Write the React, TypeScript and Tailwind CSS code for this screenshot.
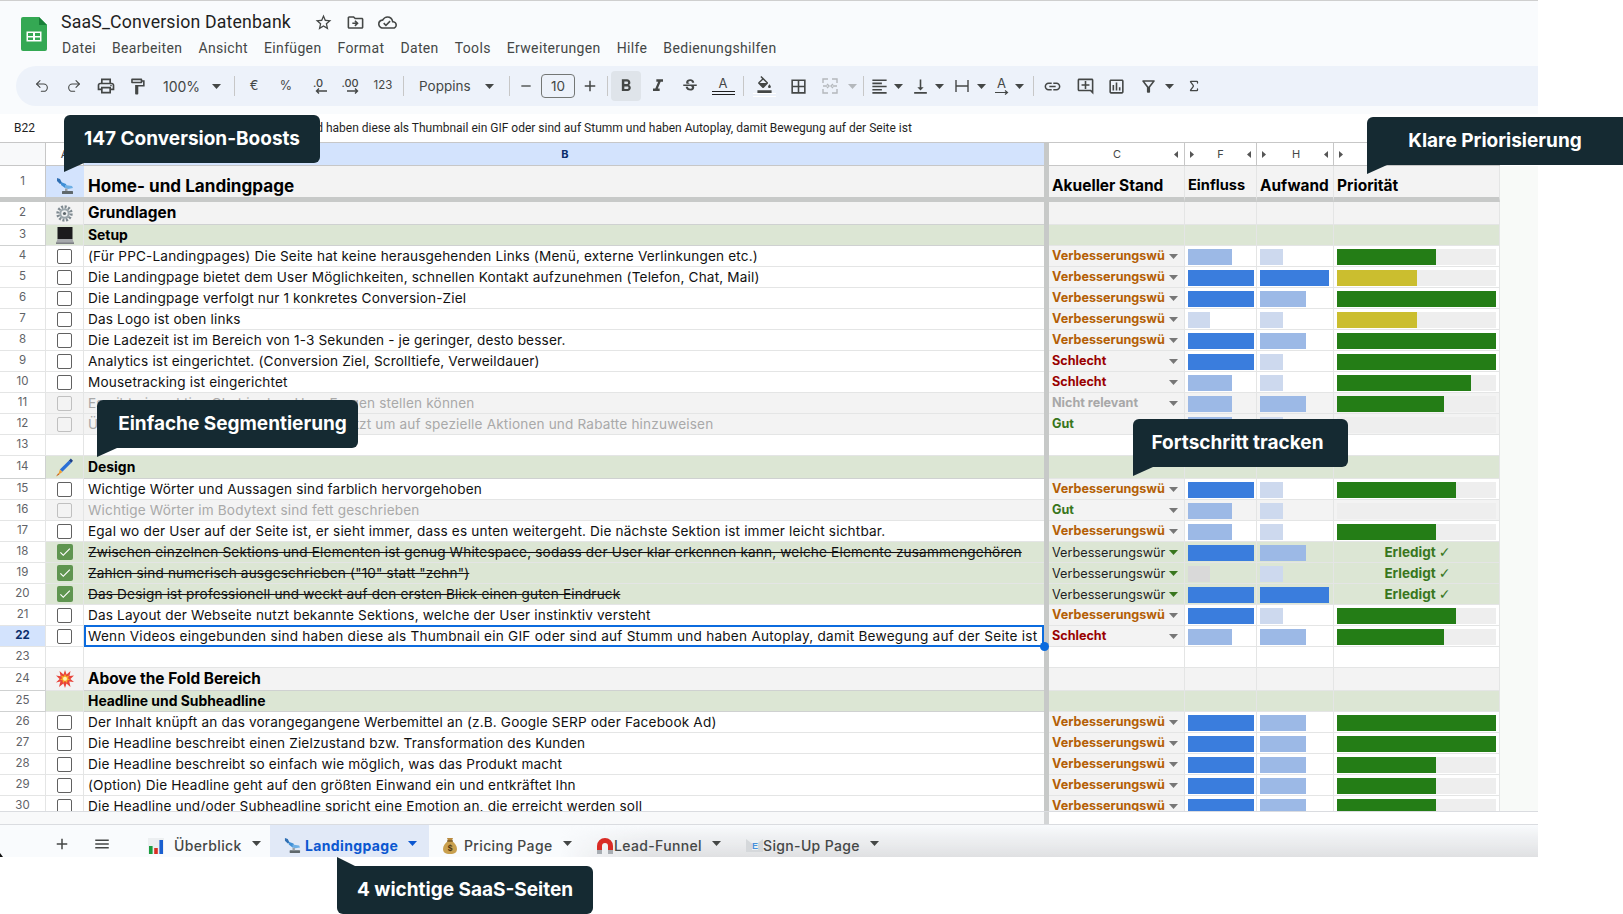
import React from "react";
import {
  MdOutlinePrint, MdOutlineFormatPaint, MdFormatBold, MdFormatItalic, MdStrikethroughS,
  MdOutlineFormatColorFill, MdBorderAll, MdFormatAlignLeft, MdVerticalAlignBottom, MdLink, MdOutlineAddComment,
  MdOutlineInsertChart, MdOutlineFilterAlt, MdStarBorder, MdOutlineDriveFileMove, MdOutlineCloudDone, MdAdd, MdRemove, MdMenu, MdCheck,
} from "react-icons/md";
import { Sigma, Undo2, Redo2 } from "lucide-react";

const Caret = ({ c = "#444746" }: { c?: string }) => (
  <svg width="9" height="5" viewBox="0 0 9 5" className="shrink-0"><path d="M0 0h9L4.5 5z" fill={c} /></svg>
);
const Sep = ({ cls }: { cls: string }) => <div className={`w-px h-[20px] bg-[#c7c7c7] shrink-0 ${cls}`} />;

const Sat = ({ s = 18 }: { s?: number }) => (
  <svg width={s} height={s} viewBox="0 0 18 18">
    <path d="M1 1l3 1 2 4-2 1-3-3z" fill="#2f6fb3" />
    <path d="M5 5l5 2 1 3-2 1-4-3z" fill="#3f8fd6" />
    <path d="M9 8l7 1 1 2-5 1-3-1z" fill="#6fb0e6" />
    <rect x="6" y="14" width="11" height="3" rx="0.5" fill="#5f686c" />
    <rect x="9" y="11.500" width="2.500" height="2.500" fill="#9aa0a6" />
  </svg>
);
const Gear = () => (
  <svg width="17" height="17" viewBox="0 0 17 17">
    <circle cx="8.5" cy="8.5" r="6.6" fill="none" stroke="#7f8a91" strokeWidth="3.2" strokeDasharray="2 1.45" />
    <circle cx="8.5" cy="8.5" r="5.2" fill="#9aa5ab" />
    <circle cx="8.5" cy="8.5" r="3.2" fill="#eef0f1" />
    <circle cx="8.5" cy="8.5" r="1.6" fill="#5d666b" />
  </svg>
);
const Laptop = () => (
  <svg width="18" height="17" viewBox="0 0 18 17">
    <rect x="1.5" y="0" width="15" height="12" fill="#1b1b1d" />
    <path d="M1.5 12h15l1.5 4H0z" fill="#a6a9ac" />
    <rect x="0" y="15.5" width="18" height="1.5" fill="#7c7f82" />
  </svg>
);
const Pen = () => (
  <svg width="19" height="19" viewBox="0 0 18 18">
    <path d="M13 2.5l2.5 2L7 13l-2.4-2z" fill="#2a6fd6" />
    <path d="M15 .5l2 2-1.500 2-2.500-2z" fill="#1c3f88" />
    <path d="M4.600 11L7 13.200 3 16z" fill="#f0a030" />
    <path d="M3 14.500l1.200 1.200L1 17.500z" fill="#c9651a" />
  </svg>
);
const Boom = () => (
  <svg width="18" height="18" viewBox="0 0 18 18">
    <path d="M9 0l1.600 4.600L14.500 1l-1 5L18 5.600l-3.600 3.300L18 12l-4.700-.5L14.500 17l-4-3.500L9 18l-1.600-4.500L3 17l1.400-5.400L0 12.500l3.600-3.600L0 5.600l4.600.6L3.500 1l4 3.600z" fill="#e8443a" />
    <path d="M9 4l1.300 2.500L13 5.500l-1 2.800L14 10l-2.600.2L11 13 9 11l-2 2-.4-2.800L4 10l2-1.700-1-2.800 2.700 1z" fill="#f9a825" />
    <circle cx="9" cy="8.800" r="2" fill="#fff3b0" />
  </svg>
);
const BarsIcon = () => (
  <svg width="16" height="16" viewBox="0 0 16 16">
    <rect width="16" height="16" fill="#eceff1" />
    <rect x="1" y="8" width="3.600" height="8" fill="#1a9e3f" />
    <rect x="6.200" y="10" width="3.600" height="6" fill="#d93025" />
    <rect x="11.400" y="2" width="3.600" height="14" fill="#1a5fd0" />
  </svg>
);
const Bag = () => (
  <svg width="14" height="17" viewBox="0 0 14 17">
    <path d="M4 1h6L8.800 4h-3.600z" fill="#b98a3e" />
    <path d="M5 4h4c3 2 5 5 5 8 0 3-2 5-7 5s-7-2-7-5c0-3 2-6 5-8z" fill="#c9a04f" />
    <rect x="4" y="3.400" width="6" height="1.200" fill="#6d4c1c" />
    <text x="7" y="14" fontSize="8.500" fontWeight="700" fill="#4d3510" textAnchor="middle" fontFamily="Liberation Sans, sans-serif">$</text>
  </svg>
);
const Magnet = () => (
  <svg width="18" height="18" viewBox="0 0 18 18">
    <path d="M1 13V9a8 8 0 0116 0v4h-5V9a3 3 0 00-6 0v4z" fill="#d92b25" />
    <rect x="1" y="13" width="5" height="4" fill="#a8adb2" />
    <rect x="12" y="13" width="5" height="4" fill="#a8adb2" />
  </svg>
);
const Mail = () => (
  <svg width="17" height="13" viewBox="0 0 17 13">
    <rect width="17" height="13" fill="#d5d8db" />
    <path d="M0 0l8.500 6.500L17 0z" fill="#eceef0" />
    <rect x="6" y="1" width="6" height="10" fill="#eef1f3" />
    <text x="9" y="10" fontSize="9" fontWeight="700" fill="#4a90d9" textAnchor="middle" fontFamily="Liberation Sans, sans-serif">E</text>
  </svg>
);

type Tone = "white" | "grey" | "green" | "off" | "done";
const toneBg: Record<Tone, string> = {
  white: "bg-white", grey: "bg-[#f3f3f3]", green: "bg-[#dce6d4]", off: "bg-[#f3f3f3]", done: "bg-[#dce6d4]",
};
type Status = "V" | "S" | "N" | "G" | "D";
interface R {
  n: number; text?: string; tone?: Tone; st?: Status; f?: string; h?: string; p?: number; c?: string; box?: boolean; icon?: React.ReactNode; head?: boolean; big?: boolean; sel?: boolean; tall?: boolean;
}

const barColor: Record<string, string> = { d: "bg-[#3a7ddd]", m: "bg-[#9cb9e6]", l: "bg-[#cdd9ee]", g: "bg-[#d9d9d9]" };
const fW: Record<string, number> = { d: 66, m: 44, l: 22, g: 22 };
const hW: Record<string, number> = { d: 69, m: 46, l: 23 };

const rows: R[] = [
  { n: 2, text: "Grundlagen", tone: "grey", head: true, big: true, icon: <Gear />, tall: true },
  { n: 3, text: "Setup", tone: "green", head: true, icon: <Laptop /> },
  { n: 4, box: true, text: "(Für PPC-Landingpages) Die Seite hat keine herausgehenden Links (Menü, externe Verlinkungen etc.)", st: "V", f: "m", h: "l", p: 62.5 },
  { n: 5, box: true, text: "Die Landingpage bietet dem User Möglichkeiten, schnellen Kontakt aufzunehmen (Telefon, Chat, Mail)", st: "V", f: "d", h: "d", p: 50, c: "y" },
  { n: 6, box: true, text: "Die Landingpage verfolgt nur 1 konkretes Conversion-Ziel", st: "V", f: "d", h: "m", p: 100 },
  { n: 7, box: true, text: "Das Logo ist oben links", st: "V", f: "l", h: "l", p: 50, c: "y" },
  { n: 8, box: true, text: "Die Ladezeit ist im Bereich von 1-3 Sekunden - je geringer, desto besser.", st: "V", f: "d", h: "m", p: 100 },
  { n: 9, box: true, text: "Analytics ist eingerichtet. (Conversion Ziel, Scrolltiefe, Verweildauer)", st: "S", f: "d", h: "l", p: 100 },
  { n: 10, box: true, text: "Mousetracking ist eingerichtet", st: "S", f: "m", h: "l", p: 84 },
  { n: 11, box: true, tone: "off", text: "Es gibt eine aktive Chat in dem User Fragen stellen können", st: "N", f: "m", h: "m", p: 67.5 },
  { n: 12, box: true, tone: "off", text: "Über der Webseite wird ein Banner genutzt um auf spezielle Aktionen und Rabatte hinzuweisen", st: "G", f: "m", h: "l" },
  { n: 13 },
  { n: 14, text: "Design", tone: "green", head: true, icon: <Pen />, tall: true },
  { n: 15, box: true, text: "Wichtige Wörter und Aussagen sind farblich hervorgehoben", st: "V", f: "d", h: "l", p: 75 },
  { n: 16, box: true, tone: "off", text: "Wichtige Wörter im Bodytext sind fett geschrieben", st: "G", f: "m", h: "l" },
  { n: 17, box: true, text: "Egal wo der User auf der Seite ist, er sieht immer, dass es unten weitergeht. Die nächste Sektion ist immer leicht sichtbar.", st: "V", f: "m", h: "l", p: 62.5 },
  { n: 18, tone: "done", text: "Zwischen einzelnen Sektions und Elementen ist genug Whitespace, sodass der User klar erkennen kann, welche Elemente zusammengehören", st: "D", f: "d", h: "m" },
  { n: 19, tone: "done", text: "Zahlen sind numerisch ausgeschrieben (\"10\" statt \"zehn\")", st: "D", f: "g", h: "l" },
  { n: 20, tone: "done", text: "Das Design ist professionell und weckt auf den ersten Blick einen guten Eindruck", st: "D", f: "d", h: "d" },
  { n: 21, box: true, text: "Das Layout der Webseite nutzt bekannte Sektions, welche der User instinktiv versteht", st: "V", f: "d", h: "l", p: 75 },
  { n: 22, box: true, sel: true, text: "Wenn Videos eingebunden sind haben diese als Thumbnail ein GIF oder sind auf Stumm und haben Autoplay, damit Bewegung auf der Seite ist", st: "S", f: "m", h: "m", p: 67.5 },
  { n: 23 },
  { n: 24, text: "Above the Fold Bereich", tone: "grey", head: true, big: true, icon: <Boom />, tall: true },
  { n: 25, text: "Headline und Subheadline", tone: "green", head: true },
  { n: 26, box: true, text: "Der Inhalt knüpft an das vorangegangene Werbemittel an (z.B. Google SERP oder Facebook Ad)", st: "V", f: "d", h: "m", p: 100 },
  { n: 27, box: true, text: "Die Headline beschreibt einen Zielzustand bzw. Transformation des Kunden", st: "V", f: "d", h: "m", p: 100 },
  { n: 28, box: true, text: "Die Headline beschreibt so einfach wie möglich, was das Produkt macht", st: "V", f: "d", h: "m", p: 62.5 },
  { n: 29, box: true, text: "(Option) Die Headline geht auf den größten Einwand ein und entkräftet Ihn", st: "V", f: "d", h: "m", p: 62.5 },
  { n: 30, box: true, text: "Die Headline und/oder Subheadline spricht eine Emotion an, die erreicht werden soll", st: "V", f: "d", h: "m", p: 62.5 },
];

const statusLabel: Record<Status, string> = { V: "Verbesserungswü", S: "Schlecht", N: "Nicht relevant", G: "Gut", D: "Verbesserungswür" };
const statusCls: Record<Status, string> = {
  V: "text-[12.6px] text-[#b45f06] font-bold",
  S: "text-[12.6px] text-[#990000] font-bold",
  N: "text-[12.6px] text-[#a8a8a8] font-bold",
  G: "text-[12.6px] text-[#38761d] font-bold",
  D: "text-[12.7px] text-[#1f1f1f] font-normal",
};

function Row({ r }: { r: R }) {
  const tone: Tone = r.tone ?? "white";
  const bg = toneBg[tone];
  const border = r.head ? "border-b border-[#cfd1d1]" : "border-b border-[#e4e5e5]";
  const isOff = tone === "off";
  const isDone = tone === "done";
  return (
    <div className={`flex shrink-0 ${r.tall ? "h-[23px]" : "h-[21px]"}`}>
      <div className={`w-[46px] shrink-0 flex items-center justify-center border-r border-[#c7c7c7] ${border} text-[11.5px] pb-px ${r.sel ? "bg-[#d3e3fd] text-[#0b2e6b] font-bold" : "bg-white text-[#5f6368]"}`}>{r.n}</div>
      <div className={`w-[38px] shrink-0 flex items-center justify-center border-r border-[#e4e5e5] ${border} ${bg}`}>
        {r.icon}
        {r.box && <div className={`w-[15px] h-[15px] rounded-[2px] border-[1.5px] ${isOff ? "border-[#c0c0c0]" : "border-[#616161]"}`} />}
        {isDone && <div className="w-[16px] h-[16px] rounded-[2px] bg-[#5f9550] flex items-center justify-center"><MdCheck className="text-white" size={14} /></div>}
      </div>
      <div className={`relative w-[960px] shrink-0 flex items-center pl-[4px] whitespace-nowrap overflow-visible ${border} ${bg} ${r.n === 14 ? "pt-px" : ""}`}>
        {r.text && (
          <span className={
            r.head
              ? `font-bold text-black ${r.big ? "text-[15.4px]" : "text-[13.9px]"}`
              : `text-[13.6px] ${r.sel ? "tracking-[0.018em]" : "tracking-[0.012em]"} ${isOff ? "text-[#a9a9a9]" : "text-[#111]"} ${isDone ? "line-through" : ""}`
          }>{r.text}</span>
        )}
        {r.sel && (
          <>
            <div className="absolute left-0 right-0 top-[-1px] bottom-[-1px] border-2 border-[#0b6bde] pointer-events-none" />
            <div className="absolute right-[-5px] bottom-[-5px] w-[9px] h-[9px] rounded-full bg-[#0b6bde] z-10" />
          </>
        )}
      </div>
      <div className="w-[5px] shrink-0 bg-[#c7c9c8]" />
      <div className={`w-[136px] shrink-0 flex items-center pl-[3px] pr-[6px] border-r border-[#e4e5e5] ${border} ${r.head || r.n === 13 || r.n === 23 || isDone ? bg : "bg-[#f3f3f3]"}`}>
        {r.st && (
          <>
            <span className={`pt-px whitespace-nowrap ${statusCls[r.st]}`}>{statusLabel[r.st]}</span>
            <span className="ml-auto"><Caret c={isDone ? "#38761d" : "#777"} /></span>
          </>
        )}
      </div>
      <div className={`w-[72px] shrink-0 pl-[3px] pt-[3px] border-r border-[#e4e5e5] ${border} ${bg}`}>
        {r.f && <div className={`h-[16px] ${barColor[r.f]}`} style={{ width: fW[r.f] }} />}
      </div>
      <div className={`w-[77px] shrink-0 pl-[3px] pt-[3px] border-r border-[#e4e5e5] ${border} ${bg}`}>
        {r.h && <div className={`h-[16px] ${barColor[r.h]}`} style={{ width: hW[r.h] }} />}
      </div>
      <div className={`w-[166px] shrink-0 border-r border-[#e4e5e5] ${border} ${bg} ${r.st && !isDone ? "pl-[3px] pt-[3px]" : ""}`}>
        {r.st && !isDone && (
          <div className="w-[159px] h-[16px] bg-[#eeeeee]">
            {r.p && <div className={`h-[16px] ${r.c === "y" ? "bg-[#cbbe2f]" : "bg-[#247d16]"}`} style={{ width: `${r.p}%` }} />}
          </div>
        )}
        {isDone && (
          <div className="h-full flex items-center justify-center font-bold text-[#38761d] text-[13.5px] pl-[2px]">Erledigt&nbsp;<span className="font-['DejaVu_Sans'] text-[14px] font-normal">✓</span></div>
        )}
      </div>
      <div className="flex-1 bg-[#f8faf8]" />
    </div>
  );
}

const Tooltip = ({ text, cls, dir = "down" }: { text: string; cls: string; dir?: "down" | "up" }) => (
  <div className={`absolute z-20 h-[48px] bg-[#152a32] text-white flex items-center justify-center font-bold text-[19px] whitespace-nowrap ${dir === "down" ? "rounded-[6px] rounded-bl-none" : "rounded-[6px] rounded-tl-none"} ${cls}`}>
    {text}
    {dir === "down" ? (
      <div className="absolute left-0 top-full w-[20px] h-[9px] bg-[#152a32] [clip-path:polygon(0_0,100%_0,0_100%)]" />
    ) : (
      <div className="absolute left-0 bottom-full w-[18px] h-[9px] bg-[#152a32] [clip-path:polygon(0_0,100%_100%,0_100%)]" />
    )}
  </div>
);

const Slot = ({ cls, children }: { cls: string; children?: React.ReactNode }) => (
  <div className={`shrink-0 flex items-center justify-center text-[#444746] ${cls}`}>{children}</div>
);

const LeftTri = () => <svg width="4" height="7" viewBox="0 0 4 7" className="shrink-0"><path d="M4 0v7L0 3.500z" fill="#555" /></svg>;
const RightTri = () => <svg width="4" height="7" viewBox="0 0 4 7" className="shrink-0"><path d="M0 0v7l4-3.500z" fill="#555" /></svg>;

const Tab = ({ icon, label, cls, active, caretCls }: { icon: React.ReactNode; label: string; cls: string; active?: boolean; caretCls: string }) => (
  <div className={`relative h-full shrink-0 flex items-center pt-[9px] ${active ? "bg-[#e1e9f7]" : ""} ${cls}`}>
    {icon}
    <span className={`text-[14px] tracking-[0.025em] ${active ? "text-[#0b57d0] font-bold" : "text-[#444746] font-medium"}`}>{label}</span>
    <span className={`pb-[5px] ${caretCls}`}><Caret c={active ? "#0b57d0" : "#444746"} /></span>
  </div>
);

export default function App() {
  return (
    <div className="relative w-[1623px] h-[914px] overflow-hidden bg-white font-['Inter',sans-serif]">
      <div className="w-[1538px] bg-[#f9fbfd] flex flex-col">
        {/* Title */}
        <div className="h-[66px] border-t border-[#cfcfcf] flex items-start pl-[21px]">
          <svg width="26" height="34" viewBox="0 0 26 34" className="mt-[16px] shrink-0">
            <path d="M2 0h16l8 8v24a2 2 0 01-2 2H2a2 2 0 01-2-2V2a2 2 0 012-2z" fill="#34a853" />
            <path d="M18 0l8 8h-8z" fill="#188038" />
            <path d="M5.500 14.500h15v10h-15z" fill="#fff" />
            <path d="M7 16h5v3H7zM14 16h5v3h-5zM7 20.500h5v2.500H7zM14 20.500h5v2.500h-5z" fill="#34a853" />
          </svg>
          <div className="ml-[14px] flex flex-col">
            <div className="flex items-center h-[23px] mt-[10px]">
              <span className="w-[231px] text-[17.7px] leading-none whitespace-nowrap text-[#1f1f1f] font-['Roboto',sans-serif] tracking-[0.01em]">SaaS_Conversion Datenbank</span>
              <Slot cls="w-[32px] ml-[15px]"><MdStarBorder size={19} /></Slot>
              <Slot cls="w-[32px]"><MdOutlineDriveFileMove size={19} /></Slot>
              <Slot cls="w-[32px]"><MdOutlineCloudDone size={19} /></Slot>
            </div>
            <div className="flex items-center gap-[16px] mt-[4px] ml-[1px] text-[14px] text-[#444746] font-['Roboto',sans-serif] tracking-[0.025em] whitespace-nowrap">
              {["Datei", "Bearbeiten", "Ansicht", "Einfügen", "Format", "Daten", "Tools", "Erweiterungen", "Hilfe", "Bedienungshilfen"].map((m) => <span key={m}>{m}</span>)}
            </div>
          </div>
        </div>

        {/* Toolbar */}
        <div className="ml-[16px] h-[40px] rounded-l-[20px] bg-[#edf2fa] flex items-center text-[#444746] shrink-0">
          <div className="w-[10px] shrink-0" />
          <Slot cls="w-[32px]"><Undo2 size={16} strokeWidth={1.6} /></Slot>
          <Slot cls="w-[32px]"><Redo2 size={16} strokeWidth={1.6} /></Slot>
          <Slot cls="w-[32px]"><MdOutlinePrint size={20} /></Slot>
          <Slot cls="w-[30px]"><MdOutlineFormatPaint size={19} /></Slot>
          <div className="w-[74px] shrink-0 flex items-center pl-[11px] pr-[5px] text-[14px]"><span>100%</span><span className="ml-auto"><Caret /></span></div>
          <Sep cls="ml-[8px]" />
          <Slot cls="w-[32px] ml-[3px] text-[13px]">€</Slot>
          <Slot cls="w-[32px] text-[12.5px]">%</Slot>
          <Slot cls="w-[32px]">
            <div className="flex flex-col items-center leading-none text-[11px] font-medium">
              <span>.0</span>
              <svg width="12" height="6" viewBox="0 0 12 6" className="-mt-[1px] ml-[5px]"><path d="M12 3H2M4 .5L1.500 3 4 5.500" stroke="#444746" strokeWidth="1.400" fill="none" /></svg>
            </div>
          </Slot>
          <Slot cls="w-[32px]">
            <div className="flex flex-col items-center leading-none text-[11px] font-medium">
              <span>.00</span>
              <svg width="12" height="6" viewBox="0 0 12 6" className="-mt-[1px] ml-[5px]"><path d="M0 3h10M8 .5L10.500 3 8 5.500" stroke="#444746" strokeWidth="1.400" fill="none" /></svg>
            </div>
          </Slot>
          <Slot cls="w-[34px] text-[11.5px]">123</Slot>
          <Sep cls="ml-[3px]" />
          <div className="w-[94px] shrink-0 flex items-center pl-[15px] pr-[4px] text-[13.5px]"><span>Poppins</span><span className="ml-auto"><Caret /></span></div>
          <Sep cls="ml-[11px]" />
          <Slot cls="w-[31px]"><MdRemove size={16} /></Slot>
          <div className="w-[34px] h-[24px] shrink-0 rounded-[4px] border border-[#747775] flex items-center justify-center text-[13.5px]">10</div>
          <Slot cls="w-[30px]"><MdAdd size={18} /></Slot>
          <Sep cls="ml-[2px]" />
          <Slot cls="w-[30px] h-[30px] ml-[3px] rounded-[4px] bg-[#dfe4ea]"><MdFormatBold size={20} /></Slot>
          <Slot cls="w-[32px] ml-px"><MdFormatItalic size={20} /></Slot>
          <Slot cls="w-[32px]"><MdStrikethroughS size={18} /></Slot>
          <Slot cls="w-[34px]">
            <div className="flex flex-col items-center w-[23px] leading-none text-[13px]">
              <span>A</span>
              <div className="w-[23px] h-[4px] mt-[1px] border-y border-[#1f1f1f]" />
            </div>
          </Slot>
          <Sep cls="ml-[3px]" />
          <Slot cls="w-[40px]">
            <div className="flex flex-col items-center">
              <MdOutlineFormatColorFill size={17} />
              <div className="w-[23px] h-[4px] border-y border-white" />
            </div>
          </Slot>
          <Slot cls="w-[28px]"><MdBorderAll size={19} /></Slot>
          <Slot cls="w-[36px]">
            <svg width="16" height="16" viewBox="0 0 16 16" fill="none" stroke="#b4b8bc" strokeWidth="1.400"><path d="M1 5V1h5M15 5V1h-5M1 11v4h5M15 11v4h-5M1 8h4M5 6l2 2-2 2M15 8h-4M11 6L9 8l2 2" /></svg>
          </Slot>
          <Slot cls="w-[8px]"><Caret c="#b4b8bc" /></Slot>
          <Sep cls="ml-[7px]" />
          <Slot cls="w-[30px]"><MdFormatAlignLeft size={19} /></Slot>
          <Slot cls="w-[8px]"><Caret /></Slot>
          <Slot cls="w-[30px] ml-[3px]"><MdVerticalAlignBottom size={19} /></Slot>
          <Slot cls="w-[8px]"><Caret /></Slot>
          <Slot cls="w-[30px] ml-[4px]">
            <svg width="14" height="14" viewBox="0 0 14 14" fill="none" stroke="#444746" strokeWidth="1.400"><path d="M1 1v12M13 1v12M1 7h12" /></svg>
          </Slot>
          <Slot cls="w-[8px]"><Caret /></Slot>
          <Slot cls="w-[27px] ml-[3px]">
            <div className="flex flex-col items-center leading-none text-[13px]">
              <span>A</span>
              <svg width="14" height="5" viewBox="0 0 14 5"><path d="M0 2.500h12M10 .5l2.500 2L10 4.500" stroke="#444746" strokeWidth="1.200" fill="none" /></svg>
            </div>
          </Slot>
          <Slot cls="w-[8px]"><Caret /></Slot>
          <Sep cls="ml-[10px]" />
          <Slot cls="w-[37px]"><MdLink size={19} /></Slot>
          <Slot cls="w-[28px]"><MdOutlineAddComment size={19} /></Slot>
          <Slot cls="w-[35px]"><MdOutlineInsertChart size={19} /></Slot>
          <Slot cls="w-[28px]"><MdOutlineFilterAlt size={19} /></Slot>
          <Slot cls="w-[8px] ml-[3px]"><Caret /></Slot>
          <Slot cls="w-[32px] ml-[5px]"><Sigma size={14} strokeWidth={2.200} /></Slot>
        </div>

        <div className="h-[8px] shrink-0" />

        {/* Formula bar */}
        <div className="h-[28px] shrink-0 bg-white flex items-center pl-[14px] font-['Roboto',sans-serif] text-[12px] text-[#1f1f1f] whitespace-nowrap">
          <span className="w-[142px] shrink-0">B22</span>
          <span>Wenn Videos eingebunden sind haben diese als Thumbnail ein GIF oder sind auf Stumm und haben Autoplay, damit Bewegung auf der Seite ist</span>
        </div>

        {/* Grid */}
        <div className="h-[669px] shrink-0 overflow-hidden flex flex-col bg-white">
          <div className="flex h-[24px] shrink-0 border-t border-[#c7c7c7] text-[11px] text-[#444746]">
            <div className="w-[46px] shrink-0 bg-[#f8f9fa] border-r border-b border-[#c7c7c7]" />
            <div className="w-[38px] shrink-0 bg-white border-r border-b border-[#c7c7c7] flex items-center justify-center">A</div>
            <div className="w-[960px] shrink-0 bg-[#d3e3fd] border-b border-[#c7c7c7] flex items-center justify-center font-bold text-[#0b2e6b] pl-[2px]">B</div>
            <div className="w-[5px] shrink-0 bg-[#c7c9c8]" />
            <div className="w-[136px] shrink-0 bg-white border-r border-b border-[#c7c7c7] flex items-center pr-[6px] pl-[64px]"><span>C</span><span className="ml-auto"><LeftTri /></span></div>
            <div className="w-[72px] shrink-0 bg-white border-r border-b border-[#c7c7c7] flex items-center justify-between px-[5px]"><RightTri /><span>F</span><LeftTri /></div>
            <div className="w-[77px] shrink-0 bg-white border-r border-b border-[#c7c7c7] flex items-center justify-between px-[5px]"><RightTri /><span className="pl-[2px]">H</span><LeftTri /></div>
            <div className="w-[166px] shrink-0 bg-white border-r border-b border-[#c7c7c7] flex items-center px-[5px]"><RightTri /></div>
            <div className="flex-1 bg-white" />
          </div>
          <div className="flex h-[36px] shrink-0 items-stretch">
            <div className="w-[46px] shrink-0 flex items-center justify-center bg-white border-r border-[#c7c7c7] border-b-[5px] border-b-[#c7c9c8] text-[11.5px] text-[#5f6368]">1</div>
            <div className="w-[38px] shrink-0 flex items-end justify-center pb-[2px] bg-[#d3e3fd] border-b-[5px] border-[#c7c9c8]"><Sat /></div>
            <div className="w-[960px] shrink-0 flex items-center pl-[4px] pt-[8px] bg-[#f3f3f3] border-b-[5px] border-[#c7c9c8] font-bold text-[17.1px] text-black">Home- und Landingpage</div>
            <div className="w-[5px] shrink-0 bg-[#c7c9c8]" />
            {[
              ["w-[136px] pl-[3px] text-[15.5px]", "Akueller Stand"],
              ["w-[72px] pl-[3px] text-[14.6px]", "Einfluss"],
              ["w-[77px] pl-[3px] text-[15.4px]", "Aufwand"],
              ["w-[166px] pl-[3px] text-[15.5px]", "Priorität"],
            ].map(([c, t]) => (
              <div key={t} className={`${c} shrink-0 flex items-center pt-[8px] bg-[#f3f3f3] border-r border-[#e4e5e5] border-b-[5px] border-b-[#c7c9c8] font-bold text-black whitespace-nowrap`}>{t}</div>
            ))}
            <div className="flex-1 bg-[#f8faf8]" />
          </div>
          {rows.map((r) => <Row key={r.n} r={r} />)}
        </div>

        {/* Below grid */}
        <div className="h-[13px] shrink-0 flex border-t border-[#dadce0]">
          <div className="w-[1044px] shrink-0 bg-[#f8f9fa]" />
          <div className="w-[5px] shrink-0 bg-[#d3d5d6]" />
          <div className="flex-1 bg-white" />
        </div>

        {/* Tabs */}
        <div className="relative h-[33px] shrink-0 flex items-center border-t border-[#dadce0] bg-[#f9fbfd]">
          <div className="absolute left-[560px] right-0 top-0 bottom-0 bg-gradient-to-b from-transparent to-[#dfe0e2] pointer-events-none [mask-image:linear-gradient(to_right,transparent,black_90px)]" />
          <Slot cls="w-[24px] ml-[50px] pt-[6px]"><MdAdd size={18} /></Slot>
          <Slot cls="w-[24px] ml-[16px] pt-[6px]"><MdMenu size={18} /></Slot>
          <Tab cls="w-[122px] ml-[34px] gap-[10px]" caretCls="" icon={<BarsIcon />} label="Überblick" />
          <Tab cls="w-[159px] pl-[14px] gap-[4px]" caretCls="ml-[6px]" active icon={<Sat s={17} />} label="Landingpage" />
          <Tab cls="w-[167px] pl-[14px] gap-[7px]" caretCls="ml-[3px]" icon={<Bag />} label="Pricing Page" />
          <Tab cls="w-[150px] gap-0" caretCls="ml-[10px]" icon={<Magnet />} label="Lead-Funnel" />
          <Tab cls="w-[140px] gap-0" caretCls="ml-[10px]" icon={<Mail />} label="Sign-Up Page" />
        </div>
      </div>

      <svg width="3" height="4" viewBox="0 0 3 4" className="absolute left-0 top-[853px]"><path d="M0 0l3 4H0z" fill="#111" /></svg>

      <Tooltip text="147 Conversion-Boosts" cls="left-[64px] top-[115px] w-[256px]" />
      <Tooltip text="Klare Priorisierung" cls="left-[1367px] top-[117px] w-[256px] rounded-r-none" />
      <Tooltip text="Einfache Segmentierung" cls="left-[97px] top-[400px] w-[261px] pl-[10px]" />
      <Tooltip text="Fortschritt tracken" cls="left-[1133px] top-[419px] w-[215px] pr-[6px]" />
      <Tooltip text="4 wichtige SaaS-Seiten" dir="up" cls="left-[337px] top-[866px] w-[256px]" />
    </div>
  );
}
